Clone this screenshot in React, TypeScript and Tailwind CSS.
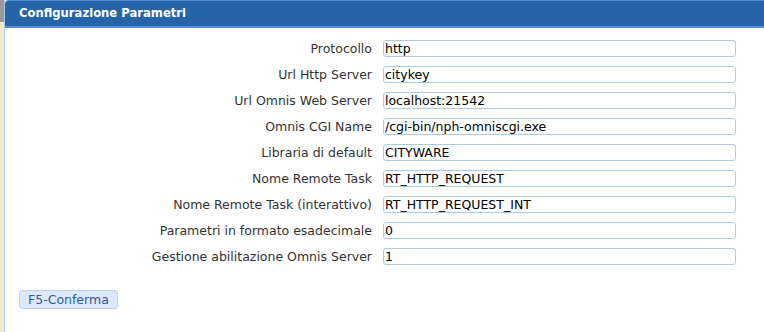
import React from "react";

const fields = [
  { label: "Protocollo", value: "http" },
  { label: "Url Http Server", value: "citykey" },
  { label: "Url Omnis Web Server", value: "localhost:21542" },
  { label: "Omnis CGI Name", value: "/cgi-bin/nph-omniscgi.exe" },
  { label: "Libraria di default", value: "CITYWARE" },
  { label: "Nome Remote Task", value: "RT_HTTP_REQUEST" },
  { label: "Nome Remote Task (interattivo)", value: "RT_HTTP_REQUEST_INT" },
  { label: "Parametri in formato esadecimale", value: "0" },
  { label: "Gestione abilitazione Omnis Server", value: "1" },
];

export default function App() {
  return (
    <div className="flex h-[332px] w-[764px] overflow-hidden bg-white font-['DejaVu_Sans',sans-serif]">
      {/* edge of the neighbouring panel */}
      <div className="flex w-[4px] flex-col">
        <div className="h-[22px] bg-[#9a9a9a]" />
        <div className="flex-1 bg-[#f3ecc8]" />
      </div>
      <div className="flex flex-1 flex-col border-l border-[#a9c8e8]">
        <div className="flex h-[28px] items-center rounded-tl-[4px] border-t border-b-2 border-t-[#4b8fd4] border-b-[#4a92da] bg-[#2565a5] pl-[14px]">
          <span className="text-[11.6px] font-bold text-white">Configurazione Parametri</span>
        </div>
        <div className="flex flex-col gap-[9px] pt-[12px]">
          {fields.map((f) => (
            <div key={f.label} className="flex items-center">
              <label className="w-[378px] pr-[11px] text-right text-[12.5px] leading-[17px] text-[#333333]">
                {f.label}
              </label>
              <input
                readOnly
                value={f.value}
                className="h-[17px] w-[353px] rounded-[3px] border border-[#a8cbe8] bg-white px-[1px] text-[12.5px] leading-[15px] text-black outline-none"
              />
            </div>
          ))}
        </div>
        <div className="pl-[14px] pt-[22px]">
          <button className="h-[19px] rounded-[3px] border border-[#b9d2ef] bg-[#dde8fd] px-[8px] text-[12.5px] leading-[17px] text-[#2d5f96]">
            F5-Conferma
          </button>
        </div>
      </div>
    </div>
  );
}
